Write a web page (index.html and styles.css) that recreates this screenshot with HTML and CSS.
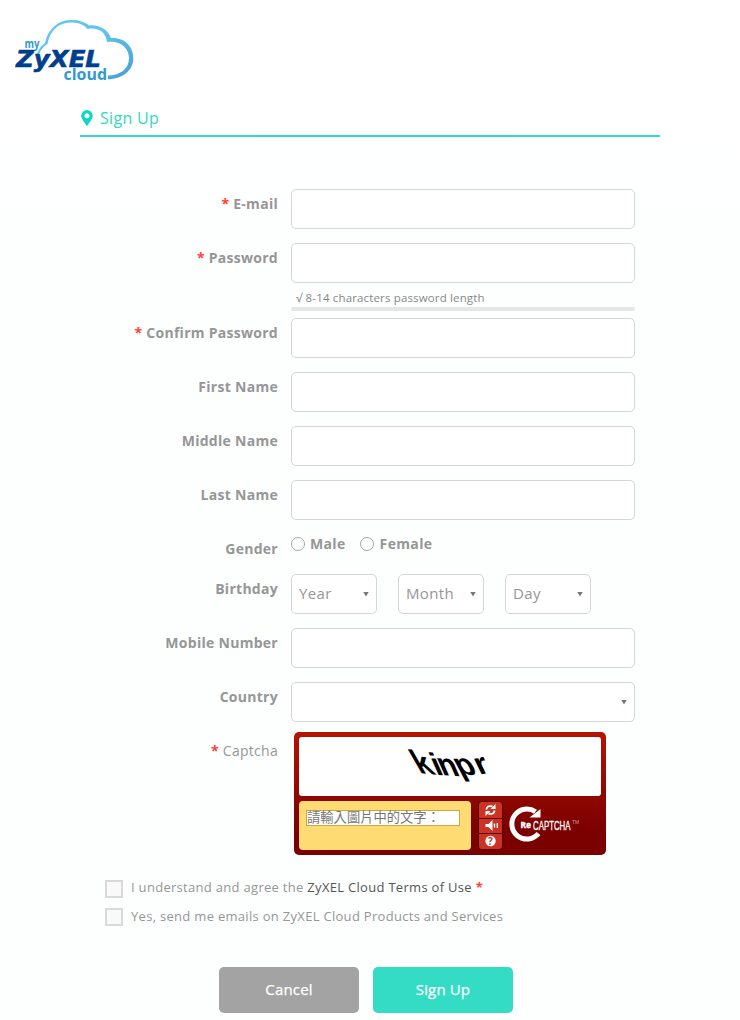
FILE: index.html
```html
<!DOCTYPE html>
<html lang="en">
<head>
<meta charset="utf-8">
<title>myZyXEL cloud - Sign Up</title>
<link rel="stylesheet" href="styles.css">
</head>
<body>
<header class="brand">
  <svg class="logo" width="124" height="66" viewBox="12 17 124 66" role="img" aria-label="myZyXEL cloud">
    <defs><linearGradient id="sky" x1="0" y1="0" x2="1" y2="1"><stop offset="0" stop-color="#5fc8ee"/><stop offset=".45" stop-color="#61c4ee"/><stop offset="1" stop-color="#469fd2"/></linearGradient></defs>
    <path fill="url(#sky)" d="M37 54C40 46 43 45 45 43C48 28 59 20 71 20C79 20 85 22 89 25.500C98 24 108 29 111 38C124 37 133.300 46 133.300 58C133.300 71 122 79 108 79.300V75.500C120 75.500 129 69 129 58C129 48 120 40 107 42C106 32 98 27 87.500 29C84 24.500 78 22.500 71 22.500C59 22.500 50 30 47.500 44C43.500 46 41.500 49 39 54Z"/>
    <text class="logo-my" x="24.500" y="48" textLength="15" lengthAdjust="spacingAndGlyphs">my</text>
    <text class="logo-name" x="16" y="66.500" textLength="85" lengthAdjust="spacingAndGlyphs">ZyXEL</text>
    <text class="logo-cloud" x="63.500" y="79.500" textLength="43.500" lengthAdjust="spacingAndGlyphs">cloud</text>
  </svg>
</header>
<main class="page">
  <h1 class="title">
    <svg class="pin" width="12" height="16" viewBox="0 0 12 16"><path fill="#0cd8c6" fill-rule="evenodd" d="M6 0a5.800 5.800 0 0 1 5.800 5.800C11.800 9 8 12.500 6.800 15.500H5.200C4 12.500.2 9 .2 5.800A5.800 5.800 0 0 1 6 0Zm0 3.300a2.500 2.500 0 1 0 0 5A2.500 2.500 0 0 0 6 3.300Z"/></svg>
    <span>Sign Up</span>
  </h1>
  <form class="form">
    <div class="row"><label class="label"><i class="req">*</i> E-mail</label><div class="box"></div></div>
    <div class="row row-password"><label class="label"><i class="req">*</i> Password</label>
      <div class="field"><div class="box"></div><div class="hint"><span class="tick">√</span> 8-14 characters password length</div><div class="meter"></div></div></div>
    <div class="row"><label class="label"><i class="req">*</i> Confirm Password</label><div class="box"></div></div>
    <div class="row"><label class="label">First Name</label><div class="box"></div></div>
    <div class="row"><label class="label">Middle Name</label><div class="box"></div></div>
    <div class="row"><label class="label">Last Name</label><div class="box"></div></div>
    <div class="row row-gender"><label class="label">Gender</label>
      <div class="radios"><span class="radio"></span><span class="male">Male</span><span class="radio"></span><span>Female</span></div></div>
    <div class="row"><label class="label">Birthday</label>
      <div class="selects">
        <div class="box select short"><span>Year</span><i class="arrow"></i></div>
        <div class="box select short"><span>Month</span><i class="arrow"></i></div>
        <div class="box select short"><span>Day</span><i class="arrow"></i></div>
      </div></div>
    <div class="row"><label class="label">Mobile Number</label><div class="box"></div></div>
    <div class="row row-country"><label class="label">Country</label><div class="box select"><span></span><i class="arrow"></i></div></div>
    <div class="row row-captcha"><label class="label light"><i class="req">*</i> Captcha</label>
      <div class="captcha">
        <div class="challenge">
          <svg width="90" height="50" viewBox="404 742 90 50">
            <g class="word">
              <text transform="translate(418.500 773) rotate(6) skewX(36)">k</text>
              <text transform="translate(435.500 775) rotate(2) skewX(26)">i</text>
              <text transform="translate(441.500 775) rotate(4) skewX(28)">n</text>
              <text transform="translate(459 774.500) rotate(0) skewX(28)">p</text>
              <text transform="translate(478.500 774.500) rotate(-10) skewX(16)">r</text>
            </g>
          </svg>
        </div>
        <div class="controls">
          <div class="answer"><div class="answer-input"><span>請輸入圖片中的文字：</span></div></div>
          <svg class="tools" width="25" height="49" viewBox="0 0 25 49">
            <rect width="25" height="49" rx="4" fill="#5c0000"/>
            <path fill="#cb3324" d="M4 1h17a3 3 0 0 1 3 3v13H1V4a3 3 0 0 1 3-3ZM1 18h23v14H1zM1 33h23v12a3 3 0 0 1-3 3H4a3 3 0 0 1-3-3z"/>
            <path fill="none" stroke="#fff" stroke-width="1.900" d="M8.500 8.500C8.500 5.500 11 4.500 14.500 5.500M16.500 9.500C16.500 12.500 14 13.500 10.500 12.500"/>
            <path fill="#fff" d="M17.500 3v5h-5zM7.500 15v-5h5zM7.500 23h3l4-4v11l-4-4h-3z"/>
            <path fill="none" stroke="#fff" stroke-width="1.300" d="M16.500 22.500v4M19.300 22v5"/>
            <circle cx="12.500" cy="40" r="5.200" fill="#fff"/><text class="help" x="12.500" y="43.500" text-anchor="middle">?</text>
          </svg>
          <svg class="recaptcha" width="80" height="40" viewBox="508 804 80 40">
            <path fill="none" stroke="#fff" stroke-width="5" d="M536.500 811.800A15 15 0 1 0 539.500 833.500"/>
            <path fill="#fff" d="M530.500 817.500h11v-8.500z"/>
            <text class="re" x="521.500" y="828" textLength="10.500" lengthAdjust="spacingAndGlyphs">Re</text>
            <text class="captcha-name" x="534" y="829.500" textLength="37.500" lengthAdjust="spacingAndGlyphs">CAPTCHA</text>
            <text class="tm" x="573" y="824" textLength="7" lengthAdjust="spacingAndGlyphs">TM</text>
          </svg>
        </div>
      </div></div>
  </form>
  <div class="agreements">
    <div class="agree"><span class="check"></span><span>I understand and agree the <a class="terms">ZyXEL Cloud Terms of Use</a> <b class="req">*</b></span></div>
    <div class="agree"><span class="check check-mail"></span><span>Yes, send me emails on ZyXEL Cloud Products and Services</span></div>
  </div>
  <div class="actions"><div class="button cancel">Cancel</div><div class="button signup">Sign Up</div></div>
</main>
</body>
</html>
```
FILE: styles.css
```css
* { box-sizing: border-box; }
body { margin: 0; height: 1020px; overflow: hidden; font-family: "Open Sans", sans-serif; color: #969696; background: linear-gradient(#fff 100px, #fcfffe 320px); }
.brand { height: 105px; padding: 17px 0 0 12px; }
.logo { display: block; }
.logo-my { font: bold 12px "Open Sans", sans-serif; fill: #3199d0; }
.logo-name { font: italic bold 23px "DejaVu Sans", sans-serif; fill: #003f8e; stroke: #003f8e; stroke-width: .6px; }
.logo-cloud { font: bold 16px "Open Sans", sans-serif; fill: #3199d0; }
.page { padding-left: 80px; }
.title { display: flex; align-items: flex-start; gap: 7px; width: 580px; height: 32px; margin: 0; padding: 5px 0 0 1px; border-bottom: 2px solid #33d9c3; font-size: 16px; font-weight: 400; line-height: 16px; color: #33d9bc; }
.title span { letter-spacing: .3px; }
.form { padding-top: 52px; }
.row { display: flex; align-items: flex-start; gap: 13px; height: 54px; }
.row-password { height: 75px; }
.row-gender { height: 40px; }
.row-country { height: 50px; }
.row-captcha { height: 139px; }
.label { width: 198px; padding-top: 5px; text-align: right; font-size: 14px; font-weight: 700; line-height: 20px; letter-spacing: .28px; white-space: nowrap; }
.light { font-weight: 400; padding-top: 9px; letter-spacing: .28px; }
.req { color: #ff4136; font-style: normal; font-weight: 700; }
.box { width: 344px; height: 40px; border: 1px solid #d4d6d6; border-radius: 5px; background: #fff; }
.hint { height: 24px; padding: 6px 0 0 5px; font-size: 11.5px; line-height: 18px; letter-spacing: .15px; color: #888; }
.meter { height: 4px; background: #e5e6e6; border-radius: 2px; }
.radios { display: flex; align-items: center; height: 20px; font-size: 14px; line-height: 18px; font-weight: 700; letter-spacing: .35px; }
.radios span:not(.radio) { padding-bottom: 1px; }
.radio { width: 14px; height: 14px; margin-right: 5px; border: 1px solid #a6a6a6; border-radius: 50%; background: #fff; }
.radio:nth-child(3) { margin-right: 6px; }
.male { margin-right: 14px; }
.selects { display: flex; gap: 21px; }
.select { display: flex; align-items: center; justify-content: space-between; padding: 0 7px; font-size: 15px; letter-spacing: .35px; }
.select span { padding-bottom: 2px; }
.short { width: 86px; }
.arrow { width: 6px; height: 5px; background: #777; clip-path: polygon(0 0, 100% 0, 50% 100%); }
.captcha { width: 312px; height: 123px; margin-left: 3px; padding: 5px; border-radius: 5px; background: linear-gradient(#b41500, #7b0000 80%); }
.challenge { display: flex; justify-content: center; height: 59px; padding-top: 5px; background: #fff; border-radius: 3px; }
.word { font: bold 31px "Liberation Sans", sans-serif; fill: #000; }
.controls { display: flex; padding-top: 5px; }
.answer { width: 172px; height: 49px; padding: 9px 0 0 7px; background: #ffdc73; border-radius: 4px; }
.answer-input { display: flex; align-items: center; width: 154px; height: 16px; border: 1px solid #cca940; background: #fff; font: 13.3px/14px "Noto Sans CJK TC", sans-serif; color: #777; white-space: nowrap; }
.answer-input span { margin-top: -2px; }
.tools { margin-left: 7px; }
.help { font: bold 10px "Open Sans", sans-serif; fill: #cb3324; }
.recaptcha { flex: none; margin: 3px 0 0 4px; }
.re { font: bold 9px "Open Sans", sans-serif; fill: #fff; stroke: #fff; stroke-width: .4px; }
.captcha-name { font: 13px "Liberation Sans", sans-serif; fill: #fff; stroke: #fff; stroke-width: .3px; }
.tm { font: 5px "Liberation Sans", sans-serif; fill: #d99; }
.agreements { padding: 7px 0 0 25px; }
.agree { display: flex; gap: 8px; height: 29px; font-size: 13px; line-height: 18px; letter-spacing: .3px; white-space: nowrap; }
.check { width: 18px; height: 18px; margin-top: 2px; border: 2px solid #d9d9d9; background: #f9f9f9; }
.check-mail { margin-top: 1px; }
.terms { color: #555; }
.actions { display: flex; gap: 14px; padding: 31px 0 0 139px; }
.button { width: 140px; height: 46px; border-radius: 5px; text-align: center; font-size: 15px; font-weight: 400; line-height: 45px; letter-spacing: .15px; color: #fff; -webkit-text-stroke: .25px #fff; }
.cancel { background: #a3a3a3; }
.signup { background: #34dcc6; }
```
